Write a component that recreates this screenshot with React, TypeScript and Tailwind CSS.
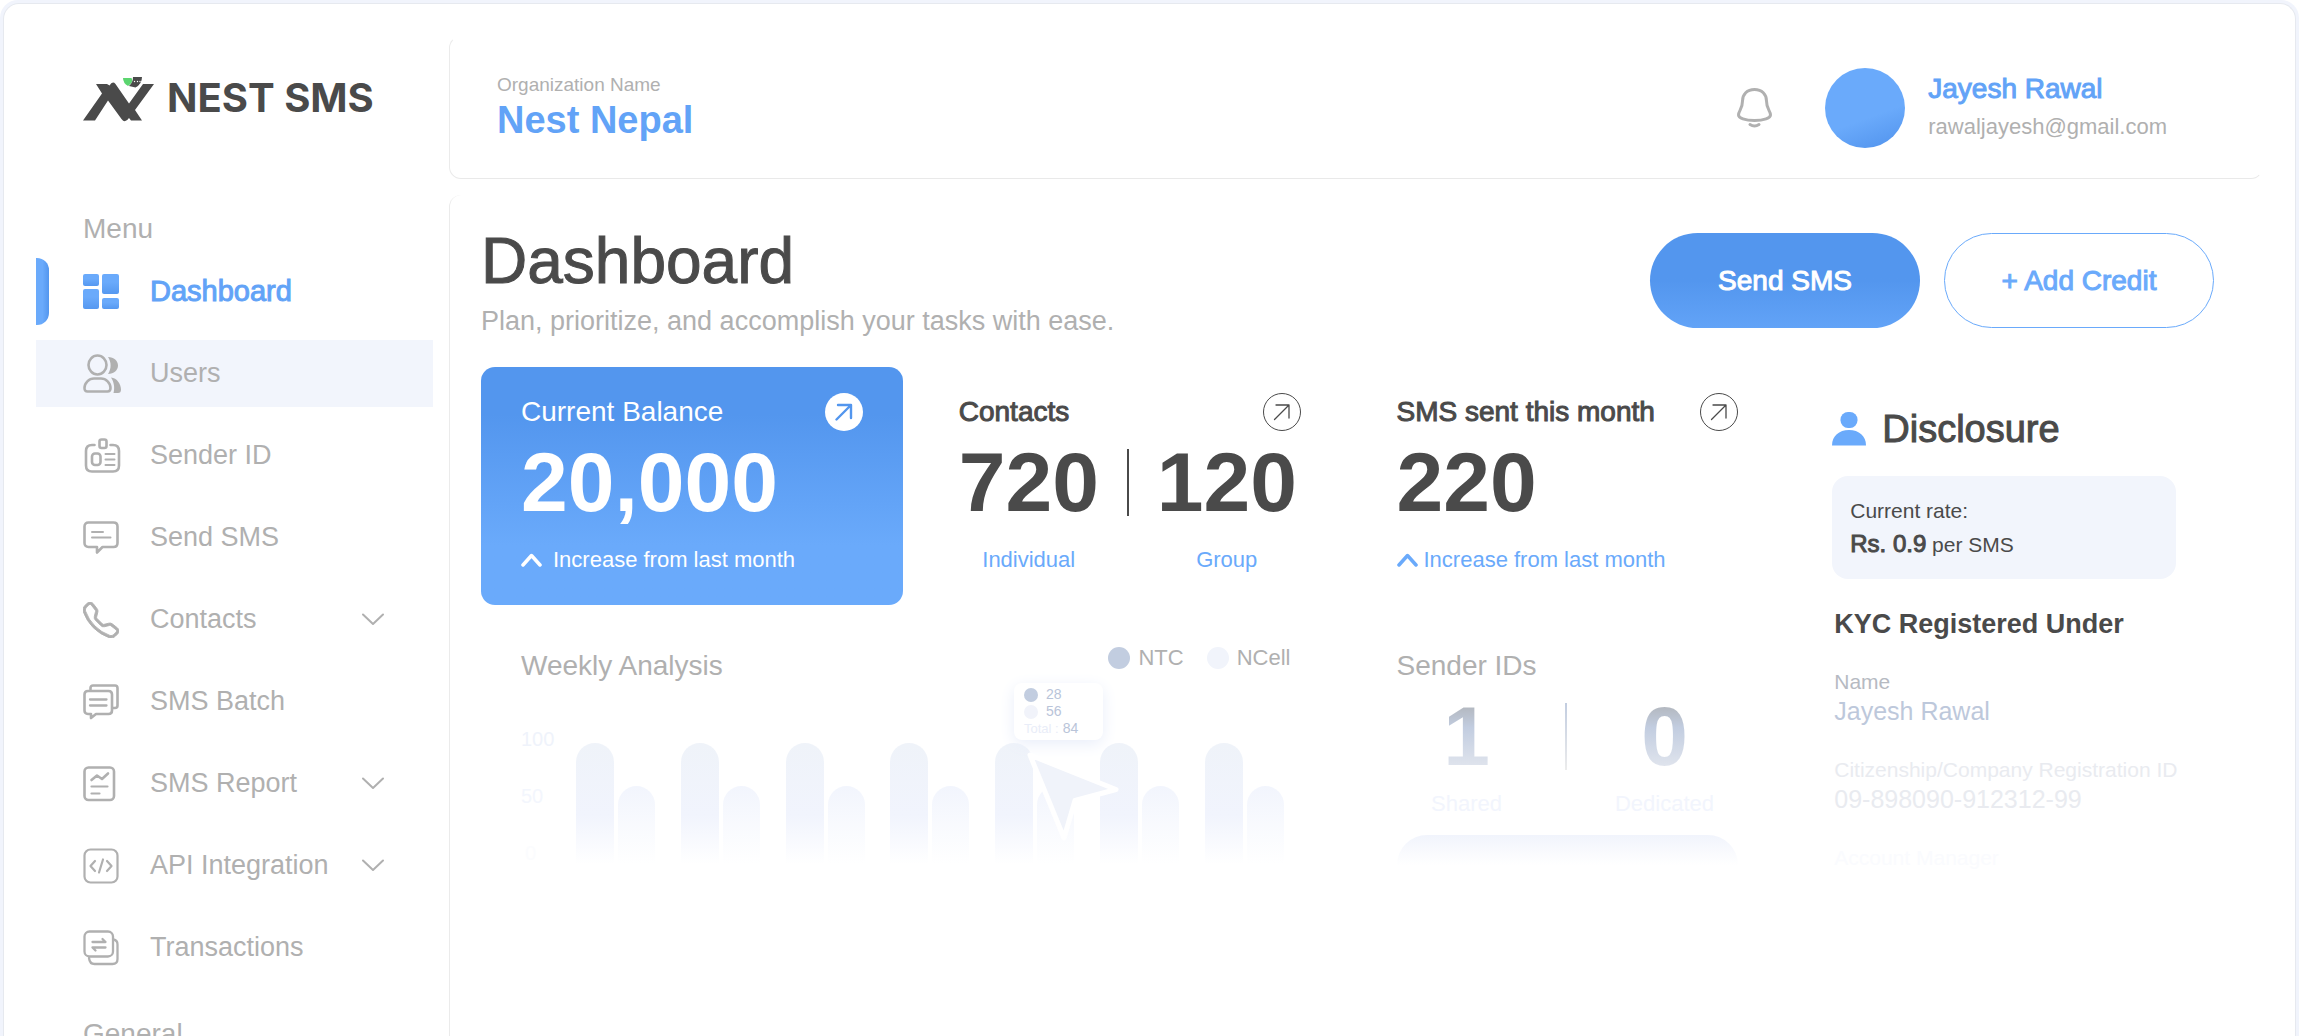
import React from 'react'
import clsx from 'clsx'
import { BsTelephone } from 'react-icons/bs'

const stroke = {
  fill: 'none',
  stroke: 'currentColor',
  strokeWidth: 2.6,
  strokeLinecap: 'round',
  strokeLinejoin: 'round',
} as const

function Logo() {
  return (
    <svg width="71" height="45" viewBox="0 0 71 45" aria-hidden="true">
      <path
        fill="#4a4a4a"
        d="M0 43.500 19 16.500 13 7h11l2.500 1.500q3-5 6-1.500L46 26.500 60 7h11L52 33l7 10.500H48l-2-2.500q-4 6-7.500 1L25 23.500 12 43.500Z"
      />
      <path fill="#5bd56f" d="M40 1h8.500q1.500 3-.5 5.500L45 9q-5-3-5-8Z" />
      <path fill="#4a4a4a" d="M50 0h9q0 7-6.500 10.500L46 9q4-3.500 4-9Z" />
      <g fill="#fff">
        <circle cx="51.500" cy="4.500" r=".7" />
        <circle cx="54.500" cy="4.500" r=".7" />
        <circle cx="57" cy="4.500" r=".7" />
      </g>
    </svg>
  )
}

function DashboardIcon() {
  return (
    <svg width="36" height="36" viewBox="0 0 36 36" aria-hidden="true">
      <defs>
        <linearGradient id="tile" x1="0" y1="0" x2="0" y2="1">
          <stop offset=".4" stopColor="#6aaafb" />
          <stop offset="1" stopColor="#5598f0" />
        </linearGradient>
      </defs>
      <g fill="url(#tile)" stroke="none">
        <rect x="0" y="0" width="16" height="12" rx="2" />
        <rect x="0" y="15" width="16" height="20" rx="2" />
        <rect x="19" y="0" width="17" height="20" rx="2" />
        <rect x="19" y="24" width="17" height="11" rx="2" />
      </g>
    </svg>
  )
}

function UsersIcon() {
  return (
    <svg width="39" height="40" viewBox="0 0 39 40" aria-hidden="true">
      <ellipse cx="14.500" cy="11" rx="9" ry="9.500" {...stroke} />
      <path d="M11 24.500h7c5 0 9.500 4.500 9.500 9.500 0 2.500-1 3.500-3 3.500H4.500c-2 0-3-1-3-3.500 0-5 4.500-9.500 9.500-9.500Z" {...stroke} />
      <path fill="currentColor" d="M25 3c6 0 10 4 10 8.500S31 20 25 20c3.500-5.500 3.500-11.500 0-17Z" />
      <path fill="currentColor" d="M28 23.500c6 .5 10 6.500 10 12 0 2.500-1 3.500-3 3.500h-4.500c1.500-5.500.5-11-2.500-15.500Z" />
    </svg>
  )
}

function SenderIcon() {
  return (
    <svg width="38" height="35" viewBox="-1 0 38 35" aria-hidden="true" {...stroke}>
      <path d="M10.500 7H8c-4 0-6 2-6 6v14.500c0 4 2 6 6 6h21c4 0 6-2 6-6V13c0-4-2-6-6-6h-2.500" />
      <rect x="15.500" y="1.500" width="7" height="8.500" rx="2" />
      <rect x="8" y="15.500" width="8.500" height="11.500" rx="3" />
      <path d="M21.500 16h9M21.500 21.500h9M21.500 27h9" strokeWidth="2" />
    </svg>
  )
}

function MessageIcon() {
  return (
    <svg width="36" height="34" viewBox="0 0 36 34" aria-hidden="true" {...stroke}>
      <path d="M5.500 1.500h25c2.500 0 4 1.500 4 4V22c0 2.500-1.500 4-4 4H19.500L14 31.500V26H5.500c-2.500 0-4-1.500-4-4V5.500c0-2.500 1.500-4 4-4Z" />
      <path d="M9 11h11M9 16.500h18.500" strokeWidth="2" />
    </svg>
  )
}

function BatchIcon() {
  return (
    <svg width="36" height="36" viewBox="0 0 36 36" aria-hidden="true" {...stroke}>
      <path d="M7.500 5.500V4c0-1.500 1-2.500 2.500-2.500h22c1.500 0 2.500 1 2.500 2.500v17.500c0 1.500-1 2.500-2.500 2.500h-2" />
      <path d="M5 7h20.500C28 7 29 8 29 10.500v16c0 2-1 3.500-3.500 3.500H13l-5 4v-4H5c-2.500 0-3.500-1.500-3.500-3.500v-16C1.500 8 2.500 7 5 7Z" />
      <path d="M7 15.500h16.500M7 21.500h16.500" strokeWidth="2.300" />
    </svg>
  )
}

function ReportIcon() {
  return (
    <svg width="33" height="36" viewBox="0 0 33 36" aria-hidden="true" {...stroke}>
      <rect x="1.500" y="1.500" width="29.500" height="32.500" rx="4" />
      <path d="m8.500 14 5.500-4.500 5 3.500 6-5.500" />
      <path d="M8.500 20.500h16M8.500 27.500h8" strokeWidth="2.200" />
    </svg>
  )
}

function ApiIcon() {
  return (
    <svg width="36" height="36" viewBox="0 0 36 36" aria-hidden="true" {...stroke}>
      <rect x="1.500" y="1.500" width="33" height="33" rx="6" strokeWidth="2.200" />
      <path d="m12 13-4.500 5 4.500 5M24 13l4.500 5-4.500 5M20 11.500l-4 13" strokeWidth="2.200" />
    </svg>
  )
}

function TransactionsIcon() {
  return (
    <svg width="36" height="36" viewBox="0 0 36 36" aria-hidden="true" {...stroke} strokeWidth="2.300">
      <rect x="1.500" y="1.500" width="28.500" height="25" rx="5" />
      <path d="M30.500 9.500c3 .5 4 2 4 5V29c0 3.500-2 5-5 5h-18c-3 0-5-1.500-5.500-6" />
      <path d="M9.500 12h13l-3-3M22.500 17.500h-13l3 3" />
    </svg>
  )
}

function Bell() {
  return (
    <svg width="35" height="40" viewBox="0 0 35 40" aria-hidden="true" {...stroke} strokeWidth="3">
      <path d="M17.500 1.500C10 1.500 5.500 6.500 5.500 13c0 8.500-4 9.500-4 14 0 3 6.500 5.500 16 5.500s16-2.500 16-5.500c0-4.500-4-5.500-4-14 0-6.500-4.500-11.500-12-11.500Z" />
      <path d="M13 36.500q4.500 3 9 0" />
    </svg>
  )
}

function ArrowBadge({ filled }: { filled?: boolean }) {
  return (
    <button
      type="button"
      aria-label="Open details"
      className={clsx(
        'flex size-[38px] shrink-0 items-center justify-center rounded-full',
        filled ? 'bg-white text-[#5396ee]' : 'border border-[#4a4a4a] text-[#4a4a4a]',
      )}
    >
      <svg width="18" height="18" viewBox="0 0 18 18" {...stroke} strokeWidth={filled ? 2.4 : 1.3}>
        <path d="M1.500 16.500 16 2M3 2h13v13" />
      </svg>
    </button>
  )
}

function Increase({ className }: { className?: string }) {
  return (
    <p className={clsx('mt-[22px] flex items-center text-[22px] leading-[28px]', className)}>
      <svg width="21" height="14" viewBox="0 0 21 14" className="shrink-0" {...stroke} strokeWidth="3.500">
        <path d="m2 12 8.500-9.500L19 12" />
      </svg>
      <span>Increase from last month</span>
    </p>
  )
}

const menu = [
  { label: 'Dashboard', icon: <DashboardIcon />, active: true },
  { label: 'Users', icon: <UsersIcon />, hovered: true },
  { label: 'Sender ID', icon: <SenderIcon /> },
  { label: 'Send SMS', icon: <MessageIcon /> },
  { label: 'Contacts', icon: <BsTelephone size={36} stroke="currentColor" strokeWidth={0.4} />, expandable: true },
  { label: 'SMS Batch', icon: <BatchIcon /> },
  { label: 'SMS Report', icon: <ReportIcon />, expandable: true },
  { label: 'API Integration', icon: <ApiIcon />, expandable: true },
  { label: 'Transactions', icon: <TransactionsIcon /> },
]

function Sidebar() {
  return (
    <aside className="w-[397px] shrink-0 rounded-t-[14px] text-[#b0b0b0]">
      <div className="flex items-end gap-[13px] pt-[38px] pl-[47px]">
        <Logo />
        <span className="font-[Inter,sans-serif] text-[40px] leading-[48px] font-bold text-[#4a4a4a]">NEST SMS</span>
      </div>
      <h2 className="mt-[89px] pl-[47px] text-[28px] leading-[36px]">Menu</h2>
      <nav className="mt-[11px] flex flex-col gap-[15px]">
        {menu.map((item) => (
          <a
            key={item.label}
            href="#"
            className={clsx(
              'relative flex h-[67px] items-center pr-[49px] pl-[47px]',
              item.active && 'text-[29px] text-[#62a3f7] [-webkit-text-stroke:1px]',
              !item.active && 'text-[27px]',
              item.hovered && 'bg-[#f2f5fc]',
            )}
          >
            {item.active && (
              <span className="absolute inset-y-0 left-0 w-[13px] rounded-r-[12px] bg-linear-to-r from-[#6aaafb] from-50% to-[#5396ee]" />
            )}
            <span className="flex w-[67px] shrink-0">{item.icon}</span>
            <span className="flex-1">{item.label}</span>
            {item.expandable && (
              <svg width="22" height="13" viewBox="0 0 22 13" {...stroke} strokeWidth="2">
                <path d="m1 1.500 10 9.500 10-9.500" />
              </svg>
            )}
          </a>
        ))}
      </nav>
      <h2 className="mt-[35px] pl-[47px] text-[28px] leading-[36px]">General</h2>
    </aside>
  )
}

function Header() {
  return (
    <header className="flex h-[143px] shrink-0 items-center justify-between rounded-[12px] border border-t-transparent border-r-transparent border-b-[#e9e9e9] border-l-[#ebebeb] pr-[95px] pl-[47px]">
      <div>
        <p className="text-[19px] leading-[24px] text-[#b0b0b0]">Organization Name</p>
        <p className="text-[38px] leading-[46px] font-bold text-[#62a3f7]">Nest Nepal</p>
      </div>
      <div className="flex items-center">
        <button type="button" aria-label="Notifications" className="mr-[53px] text-[#b0b0b0]">
          <Bell />
        </button>
        <div className="mr-[23px] size-[80px] rounded-full bg-linear-160 from-[#6aaafb] from-60% to-[#5092ec]" />
        <div className="leading-[38px]">
          <p className="text-[28px] text-[#62a3f7] [-webkit-text-stroke:1px]">Jayesh Rawal</p>
          <p className="text-[22px] text-[#b0b0b0]">rawaljayesh@gmail.com</p>
        </div>
      </div>
    </header>
  )
}

type PairProps = {
  items: { value: string; label: string }[]
  valueClass: string
  labelClass: string
  dividerClass: string
}

function StatPair({ items, valueClass, labelClass, dividerClass }: PairProps) {
  return (
    <div className="mt-[9px] flex gap-[28px]">
      {items.map((item, i) => (
        <React.Fragment key={item.label}>
          {i > 0 && <div className={clsx('mt-[9px] h-[67px] w-[2px]', dividerClass)} />}
          <div className="w-[140px] text-center">
            <p className={clsx('text-[84px] leading-[84px] font-bold', valueClass)}>{item.value}</p>
            <p className={clsx('text-[22px] leading-[28px]', labelClass)}>{item.label}</p>
          </div>
        </React.Fragment>
      ))}
    </div>
  )
}

const cardTitle = 'text-[28px] leading-[38px]'

const days = ['Sun', 'Mon', 'Tue', 'Wed', 'Thu', 'Fri', 'Sat']

function ChartTooltip() {
  return (
    <>
      <div className="absolute -top-[60px] left-[19px] z-10 w-[89px] rounded-[8px] bg-white px-[10px] py-[3px] text-[14px] leading-[17px] text-[#b9c4d9] shadow-[0_4px_16px_#e9eefa]">
        <p className="flex items-center gap-2">
          <span className="size-[14px] rounded-full bg-[#c2cde0]" />
          28
        </p>
        <p className="flex items-center gap-2">
          <span className="size-[14px] rounded-full bg-[#f1f3fa]" />
          56
        </p>
        <p className="flex gap-1 whitespace-nowrap">
          <span className="text-[13px] text-[#e9edf8]">Total :</span> 84
        </p>
      </div>
      <svg width="96" height="96" viewBox="0 0 96 96" className="absolute top-[7px] left-[31px] z-10">
        <path
          d="M4 5 90 39.500 49 50.500 38 88Z"
          fill="#f0f3fa"
          stroke="#fff"
          strokeWidth="5"
          strokeLinejoin="round"
        />
      </svg>
    </>
  )
}

function WeeklyAnalysis() {
  return (
    <section className="col-span-2 px-[40px] pt-[26px]">
      <div className="flex items-start justify-between">
        <h3 className={clsx(cardTitle, 'text-[#b0b0b0]')}>Weekly Analysis</h3>
        <ul className="flex items-center pr-[10px] text-[22px] leading-[22px] text-[#b0b0b0]">
          <li className="flex items-center gap-2">
            <span className="size-[22px] rounded-full bg-[#c2cde0]" />
            NTC
          </li>
          <li className="ml-[23px] flex items-center gap-2">
            <span className="size-[22px] rounded-full bg-[#f1f4fb]" />
            NCell
          </li>
        </ul>
      </div>
      <div className="mt-[44px] flex h-[135px] items-end pr-[17px]">
        <div className="flex w-[55px] flex-col gap-[37px] self-start text-[20px] leading-[20px]">
          <span className="text-[#eff3fb]">100</span>
          <span className="text-[#f3f6fd]">50</span>
          <span className="pl-1 text-[#fbfcfe]">0</span>
        </div>
        <div className="flex flex-1 justify-between">
          {days.map((day, i) => (
            <div key={day} className="relative flex items-end gap-[4px]">
              <div className="h-[121px] w-[38px] rounded-t-full bg-linear-to-b from-[#eff3f9] via-[#f1f4fd] via-60% to-white" />
              <div className="h-[78px] w-[37px] rounded-t-full bg-linear-to-b from-[#f2f5fd] to-white" />
              {i === 4 && <ChartTooltip />}
            </div>
          ))}
        </div>
      </div>
    </section>
  )
}

function Disclosure() {
  return (
    <section className="row-span-2 pt-[39px] pr-[40px] pl-[38px] text-[21px] leading-[28px]">
      <h2 className="flex items-center text-[38px] leading-[46px] text-[#4a4a4a] [-webkit-text-stroke:1px]">
        <svg width="34" height="34" viewBox="0 0 34 34" className="mr-[16px]" fill="#6aaafb" stroke="none">
          <rect x="8.500" y="0" width="17" height="16" rx="7.500" />
          <path d="M0 33.500C0 24 7 18 17 18s17 6 17 15.500Z" />
        </svg>
        Disclosure
      </h2>
      <div className="mt-[24px] rounded-[16px] bg-[#f2f5fc] p-[18px] leading-[33px] text-[#4a4a4a]">
        <p>Current rate:</p>
        <p>
          <span className="text-[24px] [-webkit-text-stroke:1px]">Rs. 0.9</span> per SMS
        </p>
      </div>
      <h3 className="mt-[27px] pl-[2px] text-[27px] leading-[36px] font-bold text-[#4a4a4a]">KYC Registered Under</h3>
      <dl className="mt-[26px] flex flex-col gap-[30px] pl-[2px]">
        <div>
          <dt className="text-[#b6bac2]">Name</dt>
          <dd className="text-[25px] leading-[30px] text-[#bdc8db]">Jayesh Rawal</dd>
        </div>
        <div>
          <dt className="whitespace-nowrap text-[#e9ebf0]">Citizenship/Company Registration ID</dt>
          <dd className="text-[25px] leading-[30px] text-[#e9ebf0]">09-898090-912312-99</dd>
        </div>
        <div>
          <dt className="text-[#fafbfe]">Account Manager</dt>
        </div>
      </dl>
    </section>
  )
}

function Dashboard() {
  return (
    <main className="flex-1 rounded-tl-[12px] border-l border-[#ebebeb] pt-[34px] pr-[47px] pl-[31px]">
      <div className="flex items-start justify-between pr-[2px]">
        <div>
          <h1 className="text-[64px] leading-[64px] text-[#4a4a4a] [-webkit-text-stroke:1px]">Dashboard</h1>
          <p className="mt-[12px] text-[27px] leading-[32px] text-[#b0b0b0]">
            Plan, prioritize, and accomplish your tasks with ease.
          </p>
        </div>
        <div className="mt-1 flex gap-6 text-[28px] [-webkit-text-stroke:1px]">
          <button
            type="button"
            className="h-[95px] w-[270px] rounded-full bg-linear-to-b from-[#5396ee] from-50% to-[#62a3f7] text-white"
          >
            Send SMS
          </button>
          <button
            type="button"
            className="h-[95px] w-[270px] rounded-full border border-[#6aaafb] text-[#6aaafb]"
          >
            + Add Credit
          </button>
        </div>
      </div>

      <div className="mt-[30px] grid grid-cols-4 grid-rows-[auto_1fr] gap-4">
        <section className="h-[238px] rounded-[14px] bg-linear-to-b from-[#5396ee] from-20% to-[#6aaafb] to-75% px-[40px] pt-[26px] text-white">
          <div className="flex justify-between">
            <h3 className={cardTitle}>Current Balance</h3>
            <ArrowBadge filled />
          </div>
          <p className="mt-[9px] text-[84px] leading-[84px] font-bold">20,000</p>
          <Increase className="gap-[11px]" />
        </section>

        <section className="h-[238px] px-[40px] pt-[26px] text-[#4a4a4a]">
          <div className="flex justify-between">
            <h3 className={clsx(cardTitle, '[-webkit-text-stroke:1px]')}>Contacts</h3>
            <ArrowBadge />
          </div>
          <StatPair
            items={[
              { value: '720', label: 'Individual' },
              { value: '120', label: 'Group' },
            ]}
            valueClass="mb-[22px]"
            labelClass="text-[#6aaafb]"
            dividerClass="bg-[#4a4a4a]"
          />
        </section>

        <section className="h-[238px] px-[40px] pt-[26px] text-[#4a4a4a]">
          <div className="flex justify-between">
            <h3 className={clsx(cardTitle, 'whitespace-nowrap [-webkit-text-stroke:1px]')}>SMS sent this month</h3>
            <ArrowBadge />
          </div>
          <p className="mt-[9px] text-[84px] leading-[84px] font-bold">220</p>
          <Increase className="gap-[6px] text-[#6aaafb]" />
        </section>

        <Disclosure />
        <WeeklyAnalysis />

        <section className="px-[40px] pt-[26px]">
          <h3 className={clsx(cardTitle, 'text-[#b0b0b0]')}>Sender IDs</h3>
          <StatPair
            items={[
              { value: '1', label: 'Shared' },
              { value: '0', label: 'Dedicated' },
            ]}
            valueClass="mb-[12px] bg-linear-to-b from-[#b3b8c0] from-15% via-[#c2cde0] via-40% to-[#e2e6ee] to-90% bg-clip-text text-transparent"
            labelClass="text-[#f2f5fd]"
            dividerClass="bg-linear-to-b from-[#c2cde0] to-[#ececec]"
          />
          <div className="mt-[17px] h-[30px] rounded-t-[30px] bg-linear-to-b from-[#f1f4fc] to-white" />
        </section>
      </div>
    </main>
  )
}

export default function App() {
  return (
    <div className="h-screen overflow-hidden rounded-t-[18px] bg-[#f1f4fc] px-[3px] pt-[3px] font-['Liberation_Sans',Arial,sans-serif]">
      <div className="flex h-full gap-4 rounded-t-[16px] border border-b-0 border-[#e6e9ef] bg-white px-8 pt-8">
        <Sidebar />
        <div className="flex min-w-0 flex-1 flex-col gap-4">
          <Header />
          <Dashboard />
        </div>
      </div>
    </div>
  )
}
